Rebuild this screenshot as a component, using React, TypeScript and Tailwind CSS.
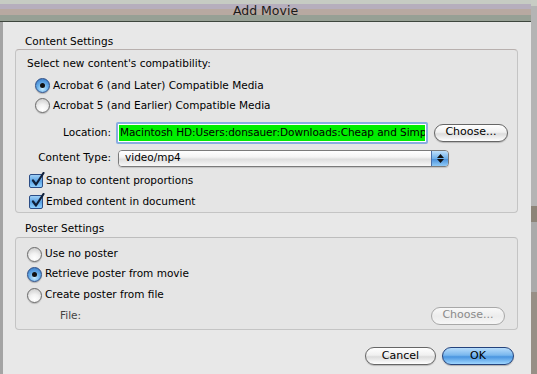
import React from "react"

const font = { fontFamily: '"DejaVu Sans", "Liberation Sans", sans-serif' }

const Radio = ({ checked }: { checked?: boolean }) =>
  checked ? (
    <span className="w-[15px] h-[15px] rounded-full border border-[#2b4d86] bg-[radial-gradient(circle_at_50%_75%,#c8ecff_0%,#6ab0ea_45%,#2f6fc0_100%)] flex items-center justify-center shrink-0 shadow-[0_1px_1px_rgba(0,0,0,0.25)]">
      <span className="w-[5px] h-[5px] rounded-full bg-[#111]" />
    </span>
  ) : (
    <span className="w-[15px] h-[15px] rounded-full border border-[#6a6a6a] bg-[radial-gradient(circle_at_50%_80%,#ffffff_0%,#f2f2f2_40%,#c4c4c4_100%)] shrink-0 shadow-[0_1px_1px_rgba(0,0,0,0.2)]" />
  )

const Checkbox = () => (
  <span className="relative w-[14px] h-[14px] rounded-[2px] border border-[#2b4d86] bg-[linear-gradient(to_bottom,#9fd0f6_0%,#5aa2e4_50%,#8fd0ff_100%)] shrink-0">
    <svg className="absolute left-[1px] -top-[3px]" width="14" height="15" viewBox="0 0 14 15">
      <path d="M2 8.5 L5 12.5 L12.5 1" fill="none" stroke="#10203a" strokeWidth="2.2" strokeLinecap="round" strokeLinejoin="round" />
    </svg>
  </span>
)

const AquaButton = ({ label, width, disabled }: { label: string; width: string; disabled?: boolean }) => (
  <div
    className={`${width} h-[18px] rounded-full flex items-center justify-center text-[11px] ${
      disabled
        ? "border border-[#a8a8a8] text-[#8a8a8a] bg-[linear-gradient(to_bottom,#f8f8f8_0%,#ececec_50%,#f6f6f6_100%)]"
        : "border border-[#666] text-black bg-[linear-gradient(to_bottom,#ffffff_0%,#f0f0f0_45%,#dcdcdc_55%,#ffffff_100%)] shadow-[0_1px_1px_rgba(0,0,0,0.2)]"
    }`}
  >
    {label}
  </div>
)

export default function App() {
  return (
    <div className="flex w-[537px] h-[374px] overflow-hidden bg-[#a9a9a9]" style={font}>
      <div className="w-[531px] flex flex-col shrink-0 bg-[#e8e8e8]">
        {/* title bar */}
        <div className="h-[22px] shrink-0 flex items-center justify-center bg-[linear-gradient(to_bottom,#c6cbc3_0px,#c6cbc3_4px,#b6aebd_4px,#b6aebd_9px,#b8a9a1_9px,#b8a9a1_15px,#97a095_15px,#97a095_21px,#3e463e_21px,#3e463e_22px)]">
          <span className="text-[12.5px] text-[#1a1a1a]">Add Movie</span>
        </div>

        <div className="flex-1 flex flex-col border-l-[3px] border-[#a4a4a4] pl-[12px] pr-[13px] text-[10.5px] text-black">
          <div className="h-[13px] leading-[13px] mt-[13px] pl-[10px]">Content Settings</div>

          {/* content settings group */}
          <div className="mt-[1px] h-[164px] rounded-[4px] border border-[#c4c4c4] border-t-[#b8b0ae] bg-[#e5e5e5] flex flex-col">
            <div className="h-[13px] leading-[13px] mt-[7px] pl-[11px]">Select new content's compatibility:</div>
            <div className="h-[20px] mt-[6px] flex items-center pl-[19px] gap-[3px]">
              <Radio checked />
              <span>Acrobat 6 (and Later) Compatible Media</span>
            </div>
            <div className="h-[20px] flex items-center pl-[19px] gap-[3px]">
              <Radio />
              <span>Acrobat 5 (and Earlier) Compatible Media</span>
            </div>

            <div className="h-[22px] mt-[6px] flex items-center">
              <span className="w-[95px] text-right shrink-0">Location:</span>
              <div className="ml-[5px] w-[312px] h-[22px] rounded-[2px] border-[2px] border-[#88aee0] bg-white p-[1px] overflow-hidden shrink-0">
                <div className="h-full bg-[#00ee00] flex items-center pl-[1px] whitespace-nowrap overflow-hidden tracking-[-0.06px]">
                  Macintosh HD:Users:donsauer:Downloads:Cheap and Simp
                </div>
              </div>
              <div className="ml-[6px]">
                <AquaButton label="Choose..." width="w-[74px]" />
              </div>
            </div>

            <div className="h-[17px] mt-[6px] flex items-center">
              <span className="w-[95px] text-right shrink-0">Content Type:</span>
              <div className="ml-[7px] w-[331px] h-[17px] rounded-[4px] border border-[#7a7a7a] flex overflow-hidden shrink-0 shadow-[0_1px_1px_rgba(0,0,0,0.15)]">
                <div className="flex-1 flex items-center pl-[6px] bg-[linear-gradient(to_bottom,#ffffff_0%,#f4f4f4_40%,#dedede_55%,#f8f8f8_100%)]">
                  video/mp4
                </div>
                <div className="w-[17px] border-l border-[#4a6fa8] flex flex-col items-center justify-center gap-[1px] bg-[linear-gradient(to_bottom,#bfe0fb_0%,#6eb0ea_50%,#4c92dc_55%,#8fcaf6_100%)]">
                  <svg width="7" height="4" viewBox="0 0 7 4"><path d="M3.5 0 L7 4 L0 4 Z" fill="#111" /></svg>
                  <svg width="7" height="4" viewBox="0 0 7 4"><path d="M0 0 L7 0 L3.5 4 Z" fill="#111" /></svg>
                </div>
              </div>
            </div>

            <div className="h-[21px] mt-[4px] flex items-center pl-[13px] gap-[3px]">
              <Checkbox />
              <span>Snap to content proportions</span>
            </div>
            <div className="h-[21px] flex items-center pl-[13px] gap-[3px]">
              <Checkbox />
              <span>Embed content in document</span>
            </div>
          </div>

          <div className="h-[13px] leading-[13px] mt-[9px] pl-[10px]">Poster Settings</div>

          {/* poster settings group */}
          <div className="mt-[2px] h-[93px] rounded-[4px] border border-[#c4c4c4] border-t-[#bdbdbd] bg-[#e5e5e5] flex flex-col">
            <div className="h-[20px] mt-[6px] flex items-center pl-[11px] gap-[3px]">
              <Radio />
              <span>Use no poster</span>
            </div>
            <div className="h-[20px] flex items-center pl-[11px] gap-[3px]">
              <Radio checked />
              <span>Retrieve poster from movie</span>
            </div>
            <div className="h-[20px] mt-[1px] flex items-center pl-[11px] gap-[3px]">
              <Radio />
              <span>Create poster from file</span>
            </div>
            <div className="h-[19px] mt-[1px] flex items-center">
              <span className="pl-[44px] text-[#444]">File:</span>
              <div className="ml-auto mr-[12px]">
                <AquaButton label="Choose..." width="w-[74px]" disabled />
              </div>
            </div>
          </div>

          <div className="mt-[17px] flex justify-end gap-[6px] pr-[4px]">
            <AquaButton label="Cancel" width="w-[71px]" />
            <div className="w-[72px] h-[18px] rounded-full border border-[#24437c] flex items-center justify-center text-[11px] text-black bg-[linear-gradient(to_bottom,#b7dcfb_0%,#79b7ee_45%,#4a95e0_55%,#9ed6ff_100%)] shadow-[0_1px_1px_rgba(0,0,0,0.25)]">
              OK
            </div>
          </div>
        </div>
      </div>

      {/* desktop peeking at the right */}
      <div className="flex-1 flex flex-col">
        <div className="h-[6px] bg-[#c8ccc4]" />
        <div className="h-[200px] bg-[#b4b4b4]" />
        <div className="h-[16px] bg-[#8c8478]" />
        <div className="h-[70px] bg-[#aaaaaa]" />
        <div className="flex-1 bg-[#978f86]" />
      </div>
    </div>
  )
}
